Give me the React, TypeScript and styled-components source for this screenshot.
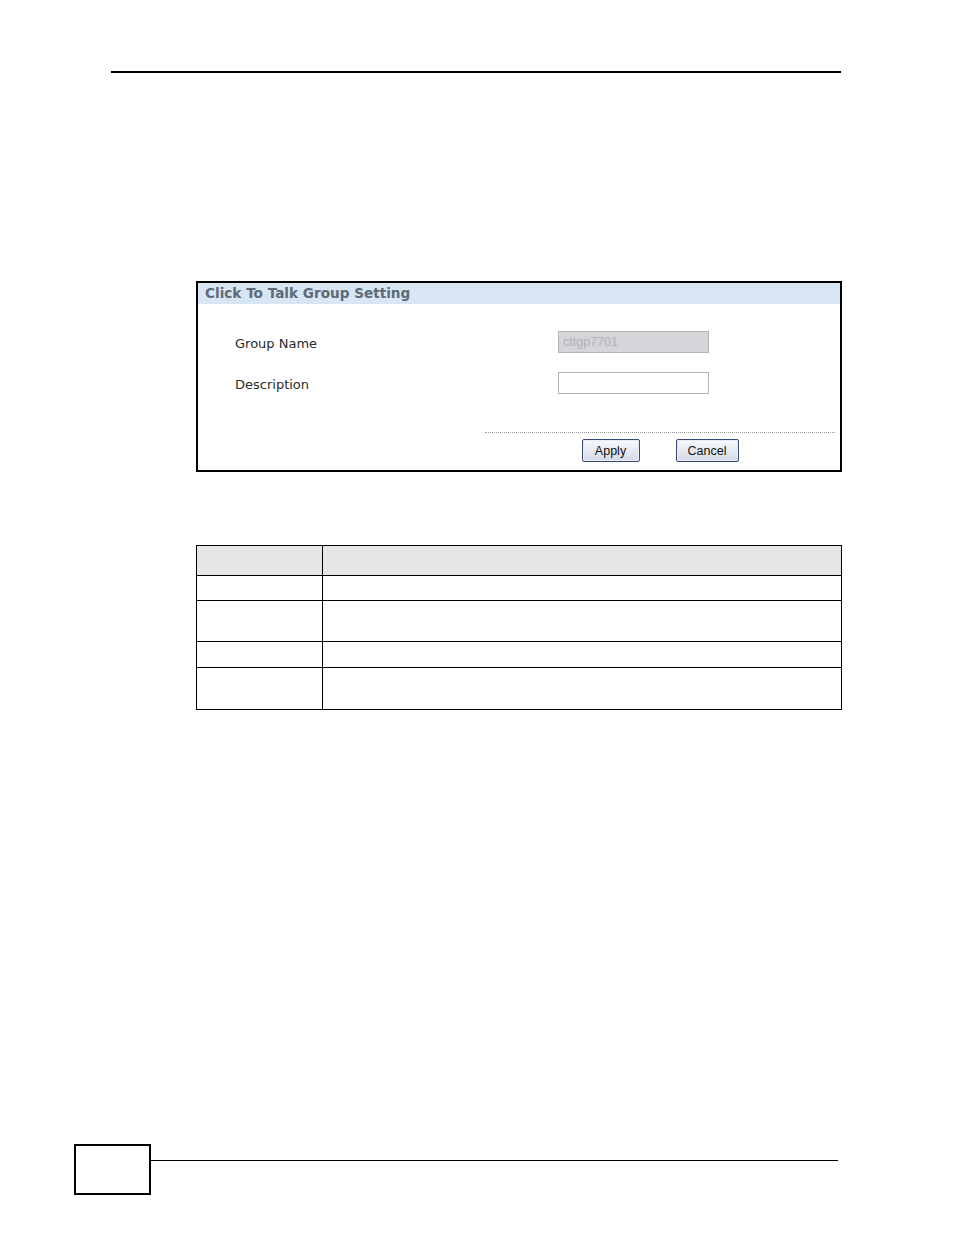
import React from "react";
import styled, { createGlobalStyle } from "styled-components";

const GlobalStyle = createGlobalStyle`
  html, body {
    margin: 0;
    padding: 0;
    background: #ffffff;
  }
  body {
    font-family: "DejaVu Sans", Verdana, sans-serif;
  }
`;

const Page = styled.div`
  width: 954px;
  height: 1235px;
  display: flex;
  flex-direction: column;
  box-sizing: border-box;
  padding-top: 71px;
  padding-bottom: 40px;
`;

const HeaderRule = styled.div`
  margin-left: 111px;
  width: 730px;
  border-top: 2px solid #000;
`;

const Panel = styled.section`
  margin-top: 208px;
  margin-left: 196px;
  width: 646px;
  height: 191px;
  box-sizing: border-box;
  border: 2px solid #000;
  display: flex;
  flex-direction: column;
`;

const PanelTitle = styled.div`
  height: 21px;
  background: #d7e6f2;
  color: #5e6a7a;
  font-family: "DejaVu Sans", Verdana, sans-serif;
  font-weight: bold;
  font-size: 13.6px;
  line-height: 21px;
  padding-left: 7px;
`;

const Form = styled.div`
  display: grid;
  grid-template-columns: 323px 151px;
  row-gap: 19px;
  padding: 27px 0 0 37px;
  align-items: center;
`;

const Label = styled.label`
  font-size: 13px;
  color: #2b2b2b;
  padding-top: 2px;
`;

const TextBox = styled.div<{ $disabled?: boolean }>`
  height: 22px;
  box-sizing: border-box;
  border: 1px solid #b4b4b4;
  background: ${(p) => (p.$disabled ? "#d5d5d9" : "#ffffff")};
  color: #b2b2b6;
  font-family: "Liberation Sans", Arial, sans-serif;
  font-size: 12.5px;
  line-height: 20px;
  padding-left: 4px;
`;

const Footer = styled.div`
  margin: 38px 5px 0 287px;
  border-top: 1px dotted #9a9a9a;
  display: flex;
  justify-content: center;
  gap: 36px;
  padding-top: 6px;
`;

const Button = styled.button<{ $w: number }>`
  width: ${(p) => p.$w}px;
  height: 23px;
  box-sizing: border-box;
  border: 1px solid #3a4a74;
  border-radius: 2px;
  background: linear-gradient(#f7f9fc, #d3dbe7);
  box-shadow: inset 0 0 0 1px #e8edf5;
  font-family: "Liberation Sans", Arial, sans-serif;
  font-size: 12.5px;
  color: #111;
  padding: 0;
`;

const Table = styled.table`
  margin-top: 73px;
  margin-left: 196px;
  width: 646px;
  border-collapse: collapse;
`;

const Row = styled.tr<{ $h: number; $head?: boolean }>`
  height: ${(p) => p.$h}px;
  background: ${(p) => (p.$head ? "#e6e6e6" : "#ffffff")};
`;

const Cell = styled.td`
  border: 1px solid #000;
  padding: 0;
  &:first-child {
    width: 125px;
  }
`;

const PageFooter = styled.div`
  margin-top: auto;
  margin-left: 74px;
  display: flex;
  align-items: flex-start;
`;

const PageNumberBox = styled.div`
  width: 77px;
  height: 51px;
  box-sizing: border-box;
  border: 2px solid #000;
`;

const FooterRule = styled.div`
  margin-top: 16px;
  width: 687px;
  border-top: 1px solid #000;
`;

const rows = [30, 25, 41, 26, 42];

export default function App() {
  return (
    <>
      <GlobalStyle />
      <Page>
        <HeaderRule />
        <Panel>
          <PanelTitle>Click To Talk Group Setting</PanelTitle>
          <Form>
            <Label>Group Name</Label>
            <TextBox $disabled>cttgp7701</TextBox>
            <Label>Description</Label>
            <TextBox />
          </Form>
          <Footer>
            <Button $w={58}>Apply</Button>
            <Button $w={63}>Cancel</Button>
          </Footer>
        </Panel>
        <Table>
          <tbody>
            {rows.map((h, i) => (
              <Row key={i} $h={h} $head={i === 0}>
                <Cell />
                <Cell />
              </Row>
            ))}
          </tbody>
        </Table>
        <PageFooter>
          <PageNumberBox />
          <FooterRule />
        </PageFooter>
      </Page>
    </>
  );
}
